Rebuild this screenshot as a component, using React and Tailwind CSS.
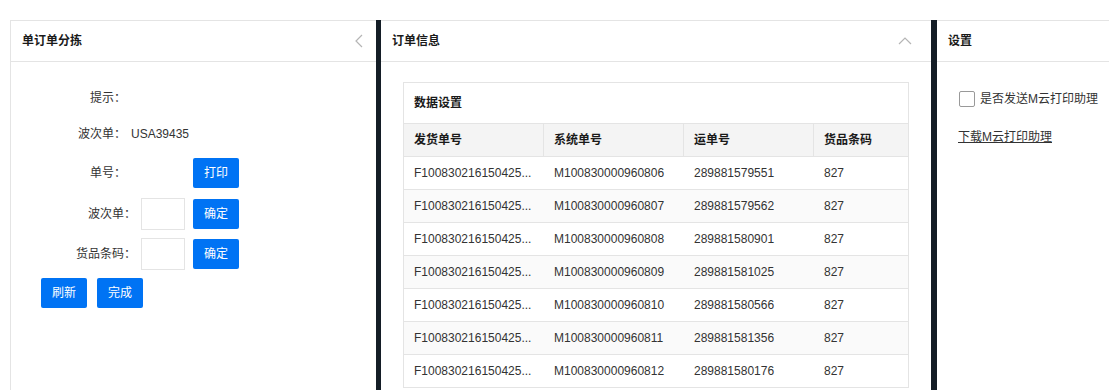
const rows = [
  ['M100830000960806', '289881579551'],
  ['M100830000960807', '289881579562'],
  ['M100830000960808', '289881580901'],
  ['M100830000960809', '289881581025'],
  ['M100830000960810', '289881580566'],
  ['M100830000960811', '289881581356'],
  ['M100830000960812', '289881580176'],
];

const font = { fontFamily: '"Liberation Sans", "Noto Sans CJK SC", sans-serif' };

function BlueButton({ children, className = '' }) {
  return (
    <button className={`h-[30px] w-[46px] rounded-[2px] bg-[#0073f4] text-[12px] text-white ${className}`}>
      {children}
    </button>
  );
}

function PanelHeader({ title, icon }) {
  return (
    <div className="flex h-[41px] items-center justify-between border-b border-[#e4e4e4] pl-[11px] pr-[14px]">
      <span className="text-[12px] font-bold text-[#1a1a1a]">{title}</span>
      {icon}
    </div>
  );
}

export default function App() {
  return (
    <div className="h-[390px] w-[1109px] overflow-hidden bg-white pt-[20px] text-[12px] text-[#333]" style={font}>
      <div className="flex h-full">
        {/* 单订单分拣 */}
        <div className="ml-[10px] w-[366px] border-l border-t border-[#e4e4e4]">
          <PanelHeader
            title="单订单分拣"
            icon={
              <svg width="10" height="14" viewBox="0 0 10 14" fill="none" stroke="#b5b5b5" strokeWidth="1.2" className="mr-[-2px]">
                <path d="M8 1 L2 7 L8 13" />
              </svg>
            }
          />
          <div className="pt-[26px]">
            <div className="flex h-[20px] items-center">
              <span className="w-[115px] text-right">提示：</span>
            </div>
            <div className="mt-[16px] flex h-[20px] items-center">
              <span className="w-[115px] text-right">波次单：</span>
              <span className="ml-[5px]">USA39435</span>
            </div>
            <div className="mt-[14px] flex h-[30px] items-center">
              <span className="w-[115px] text-right">单号：</span>
              <BlueButton className="ml-[67px]">打印</BlueButton>
            </div>
            <div className="mt-[10px] flex h-[32px] items-center">
              <span className="w-[125px] text-right">波次单：</span>
              <input className="ml-[5px] h-[32px] w-[44px] border border-[#e4e4e4] outline-none" />
              <BlueButton className="ml-[8px]">确定</BlueButton>
            </div>
            <div className="mt-[8px] flex h-[32px] items-center">
              <span className="w-[125px] text-right">货品条码：</span>
              <input className="ml-[5px] h-[32px] w-[44px] border border-[#e4e4e4] outline-none" />
              <BlueButton className="ml-[8px]">确定</BlueButton>
            </div>
            <div className="mt-[8px] flex gap-[10px] pl-[30px]">
              <BlueButton>刷新</BlueButton>
              <BlueButton>完成</BlueButton>
            </div>
          </div>
        </div>

        <div className="w-[5px] bg-[#141d26]" />

        {/* 订单信息 */}
        <div className="w-[550px] border-t border-[#e4e4e4]">
          <PanelHeader
            title="订单信息"
            icon={
              <svg width="14" height="8" viewBox="0 0 14 8" fill="none" stroke="#b5b5b5" strokeWidth="1.2" className="mr-[5px]">
                <path d="M1 7 L7 1 L13 7" />
              </svg>
            }
          />
          <div className="mx-[22px] mt-[20px] border border-[#e4e4e4]">
            <div className="flex h-[40px] items-center pl-[10px] font-bold text-[#1a1a1a]">数据设置</div>
            <div className="grid grid-cols-[140px_140px_130px_1fr] border-t border-[#e4e4e4] bg-[#f4f4f4] font-bold text-[#1a1a1a]">
              <div className="flex h-[32px] items-center border-r border-[#e4e4e4] pl-[10px]">发货单号</div>
              <div className="flex h-[32px] items-center border-r border-[#e4e4e4] pl-[10px]">系统单号</div>
              <div className="flex h-[32px] items-center border-r border-[#e4e4e4] pl-[10px]">运单号</div>
              <div className="flex h-[32px] items-center pl-[10px]">货品条码</div>
            </div>
            {rows.map((r, i) => (
              <div
                key={r[0]}
                className={`grid h-[33px] grid-cols-[140px_140px_130px_1fr] items-center border-t border-[#e4e4e4] ${i % 2 ? 'bg-[#fafafa]' : 'bg-white'}`}
              >
                <div className="truncate pl-[10px] pr-[8px]">F100830216150425...</div>
                <div className="pl-[10px]">{r[0]}</div>
                <div className="pl-[10px]">{r[1]}</div>
                <div className="pl-[10px]">827</div>
              </div>
            ))}
          </div>
        </div>

        <div className="w-[6px] bg-[#141d26]" />

        {/* 设置 */}
        <div className="flex-1 border-t border-[#e4e4e4]">
          <PanelHeader title="设置" />
          <div className="pl-[22px] pt-[28px]">
            <label className="flex items-center">
              <span className="h-[16px] w-[16px] rounded-[2px] border border-[#999]" />
              <span className="ml-[5px]">是否发送M云打印助理</span>
            </label>
            <div className="mt-[20px] -ml-[1px]">
              <span className="underline">下载M云打印助理</span>
            </div>
          </div>
        </div>
      </div>
    </div>
  );
}
